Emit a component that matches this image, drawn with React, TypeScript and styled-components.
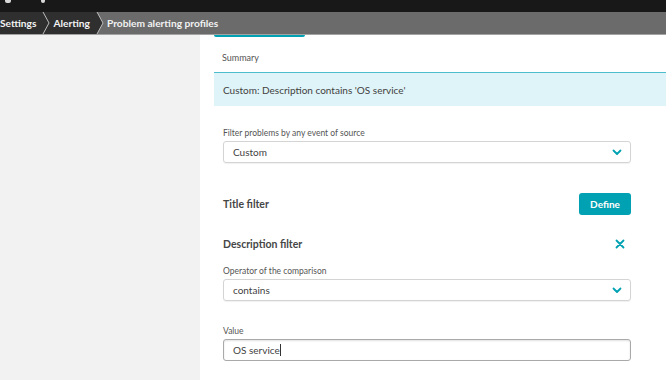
import React from "react";
import styled, { createGlobalStyle } from "styled-components";

const Global = createGlobalStyle`
  html, body { margin: 0; padding: 0; background: #fff; }
  body { font-family: Lato, "Open Sans", sans-serif; color: #454646; }
  * { box-sizing: border-box; }
`;

const Page = styled.div`
  width: 666px;
  height: 380px;
  display: flex;
  flex-direction: column;
  overflow: hidden;
`;

const TopBar = styled.div`
  height: 12px;
  background: #181818;
  display: flex;
  align-items: flex-start;
  gap: 30px;
  padding-left: 5px;
  flex-shrink: 0;
`;

const TopGlyph = styled.span<{ $w: number }>`
  display: block;
  width: ${(p) => p.$w}px;
  height: 3px;
  background: #d8d8d8;
  border-radius: 0 0 2px 2px;
`;

const Crumbs = styled.nav`
  height: 23px;
  background: #6b6b6b;
  border-bottom: 1px solid #a3a3a3;
  display: flex;
  align-items: stretch;
  flex-shrink: 0;
`;

const Crumb = styled.div<{ $dark?: boolean; $pad: number }>`
  display: flex;
  align-items: center;
  padding: 0 4px 0 ${(p) => p.$pad}px;
  background: ${(p) => (p.$dark ? "#2f2f2f" : "transparent")};
  color: #f2f2f2;
  font-size: 10.2px;
  font-weight: 700;
  white-space: nowrap;
`;

const Sep = styled.svg`
  display: block;
  width: 10px;
  height: 22px;
  flex-shrink: 0;
`;

const Body = styled.div`
  flex: 1;
  display: flex;
  min-height: 0;
`;

const Sidebar = styled.aside`
  width: 200px;
  background: #f3f2f3;
  flex-shrink: 0;
`;

const Main = styled.main`
  flex: 1;
  padding-left: 14px;
  display: flex;
  flex-direction: column;
`;

const TabStripe = styled.div`
  width: 91px;
  height: 2px;
  background: #00a1b2;
  border-radius: 0 0 2px 2px;
`;

const SummaryLabel = styled.div`
  font-size: 9px;
  color: #555;
  padding: 15px 0 0 8px;
  height: 35px;
`;

const SummaryBox = styled.div`
  height: 34px;
  background: #dff4f8;
  border-top: 1px solid #4dbccb;
  display: flex;
  align-items: center;
  padding-left: 9px;
  font-size: 10px;
  color: #3f3f3f;
`;

const Form = styled.div`
  padding: 0 35px 0 9px;
  display: flex;
  flex-direction: column;
`;

const FieldLabel = styled.div<{ $top: number }>`
  font-size: 8.5px;
  color: #555;
  margin-top: ${(p) => p.$top}px;
  height: 10px;
  line-height: 10px;
  margin-bottom: 3px;
`;

const Select = styled.div`
  height: 22px;
  border: 1px solid #d4d4d4;
  border-radius: 3px;
  box-shadow: 0 1px 1px rgba(0, 0, 0, 0.06);
  display: flex;
  align-items: center;
  justify-content: space-between;
  padding: 0 8px 0 9px;
  font-size: 10px;
  color: #3f3f3f;
`;

const Input = styled.div`
  height: 22px;
  border: 1px solid #a9a9a9;
  border-radius: 3px;
  box-shadow: inset 0 1px 2px rgba(0, 0, 0, 0.12);
  display: flex;
  align-items: center;
  padding: 0 9px;
  font-size: 10px;
  color: #3f3f3f;
`;

const Caret = styled.span`
  display: inline-block;
  width: 1px;
  height: 12px;
  background: #333;
`;

const SectionRow = styled.div<{ $top: number }>`
  margin-top: ${(p) => p.$top}px;
  height: 22px;
  display: flex;
  align-items: center;
  justify-content: space-between;
`;

const SectionTitle = styled.div`
  font-size: 10.5px;
  font-weight: 700;
  color: #454646;
`;

const Button = styled.button`
  height: 22px;
  width: 52px;
  border: none;
  border-radius: 3px;
  background: #00a1b2;
  color: #fff;
  font-family: inherit;
  font-size: 10px;
  font-weight: 700;
  padding: 0;
`;

const IconBtn = styled.span`
  display: flex;
  margin-right: 6px;
`;

const Chevron = () => (
  <svg width="10" height="7" viewBox="0 0 10 7">
    <path d="M1.5 1.5 L5 5 L8.5 1.5" fill="none" stroke="#00a1b2" strokeWidth="1.8" strokeLinecap="round" strokeLinejoin="round" />
  </svg>
);

const Close = () => (
  <svg width="10" height="10" viewBox="0 0 10 10">
    <path d="M1.5 1.5 L8.5 8.5 M8.5 1.5 L1.5 8.5" stroke="#00a1b2" strokeWidth="1.8" strokeLinecap="round" />
  </svg>
);

const Separator = ({ left, right }: { left: string; right: string }) => (
  <Sep viewBox="0 0 10 22" preserveAspectRatio="none">
    <rect x="0" y="0" width="10" height="22" fill={right} />
    <polygon points="0,0 3,0 9,11 3,22 0,22" fill={left} />
    <polyline points="3,0 9,11 3,22" fill="none" stroke="#bdbdbd" strokeWidth="1" />
  </Sep>
);

export default function App() {
  return (
    <Page>
      <Global />
      <TopBar>
        <TopGlyph $w={6} />
        <TopGlyph $w={4} />
      </TopBar>
      <Crumbs>
        <Crumb $dark $pad={0}>Settings</Crumb>
        <Separator left="#2f2f2f" right="#2f2f2f" />
        <Crumb $dark $pad={3}>Alerting</Crumb>
        <Separator left="#2f2f2f" right="#6b6b6b" />
        <Crumb $pad={3}>Problem alerting profiles</Crumb>
      </Crumbs>
      <Body>
        <Sidebar />
        <Main>
          <TabStripe />
          <SummaryLabel>Summary</SummaryLabel>
          <SummaryBox>Custom: Description contains 'OS service'</SummaryBox>
          <Form>
            <FieldLabel $top={22}>Filter problems by any event of source</FieldLabel>
            <Select>
              Custom
              <Chevron />
            </Select>
            <SectionRow $top={30}>
              <SectionTitle>Title filter</SectionTitle>
              <Button>Define</Button>
            </SectionRow>
            <SectionRow $top={18}>
              <SectionTitle>Description filter</SectionTitle>
              <IconBtn>
                <Close />
              </IconBtn>
            </SectionRow>
            <FieldLabel $top={11}>Operator of the comparison</FieldLabel>
            <Select>
              contains
              <Chevron />
            </Select>
            <FieldLabel $top={25}>Value</FieldLabel>
            <Input>
              OS service
              <Caret />
            </Input>
          </Form>
        </Main>
      </Body>
    </Page>
  );
}
